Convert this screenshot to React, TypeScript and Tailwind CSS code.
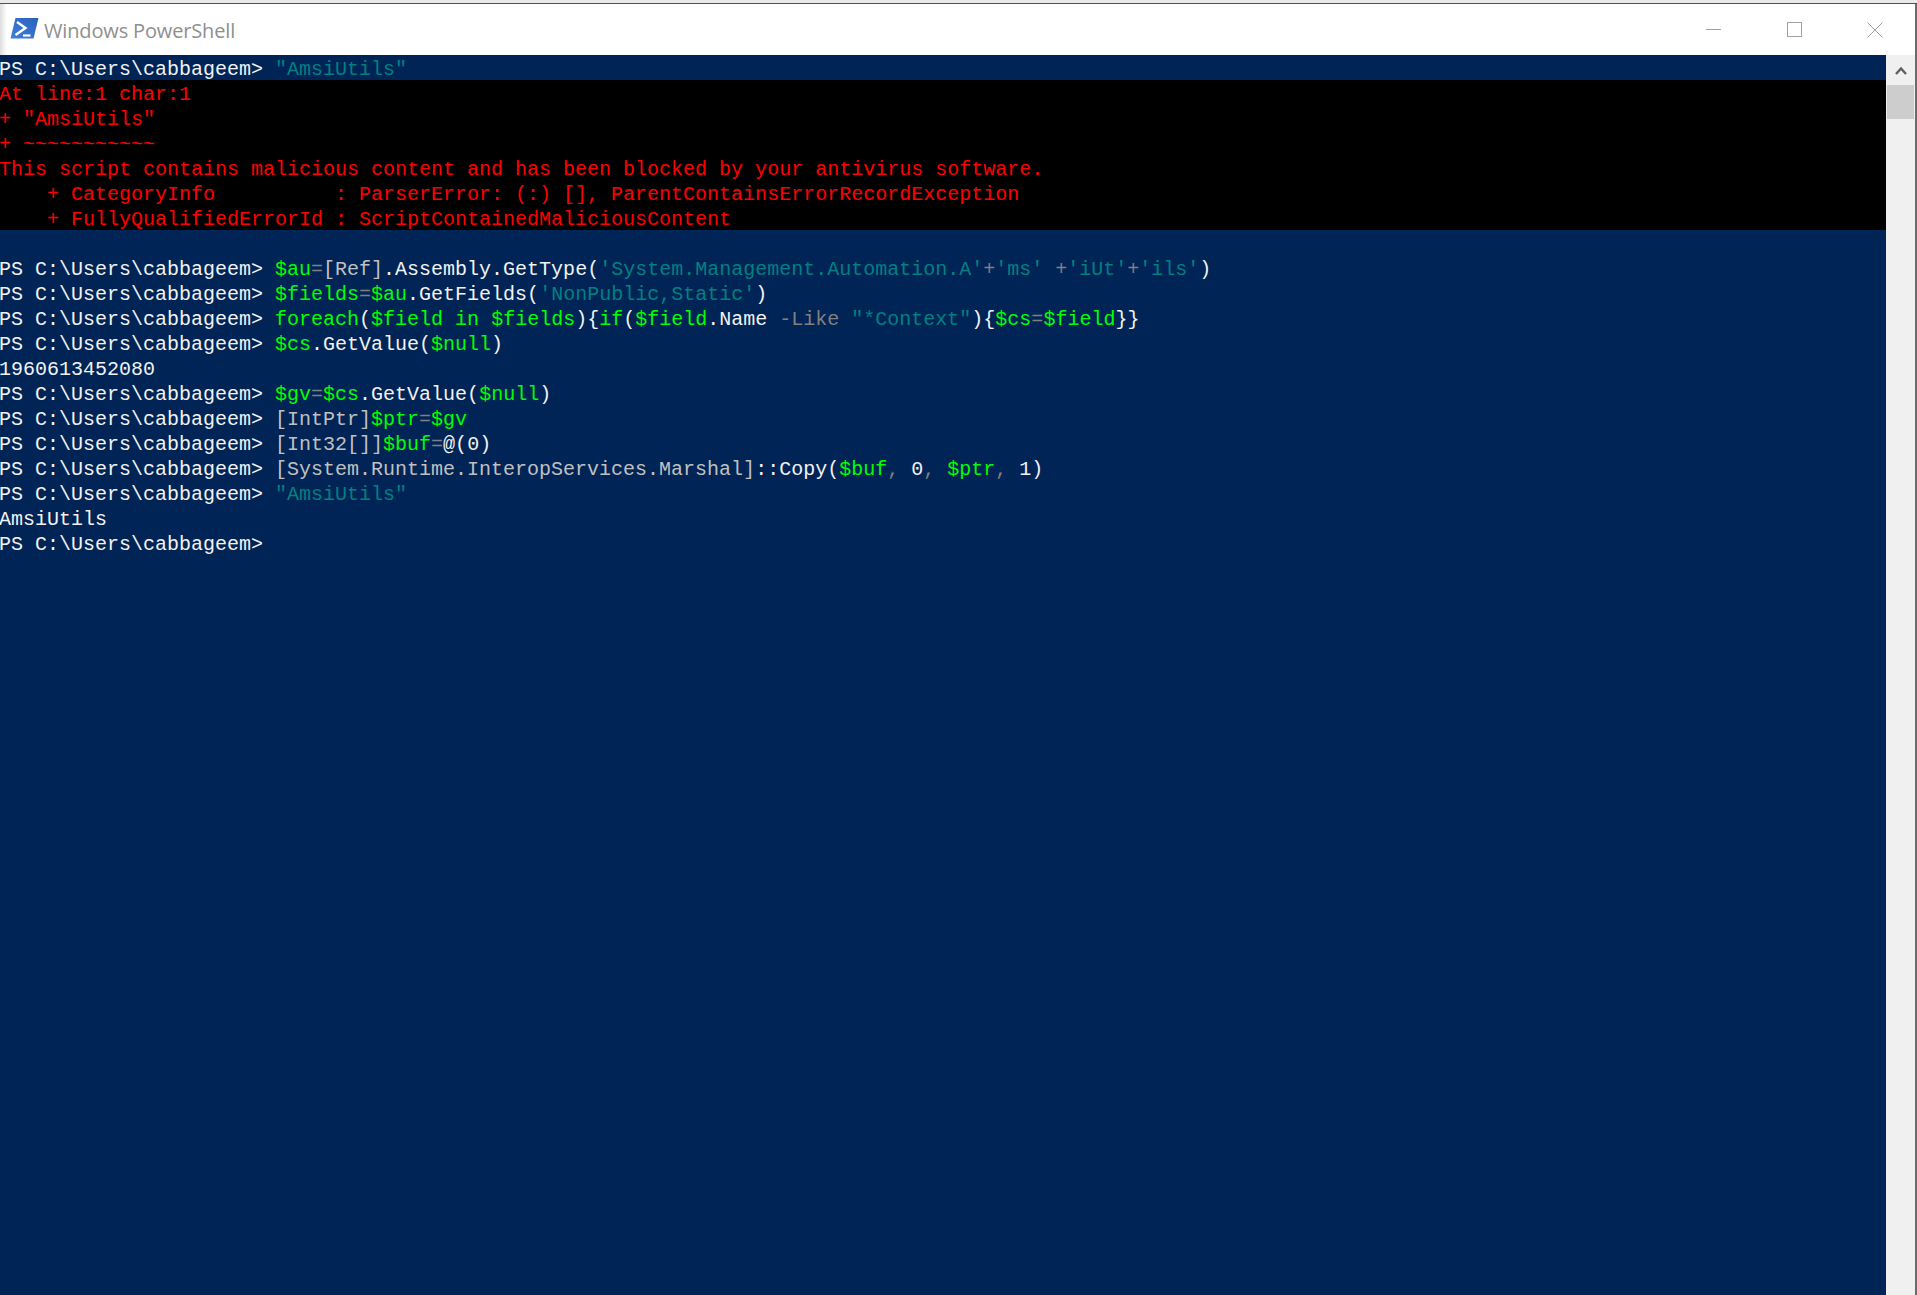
import React from 'react';

// token colours, same as the PSReadLine defaults on the blue console
const W = 'text-[#f2f2f2]';
const G = 'text-[#00ff00]';
const T = 'text-[#008080]';
const S = 'text-[#c0c0c0]';
const D = 'text-[#808080]';

type Run = [string, string];

function Prompt({ runs }: { runs?: Run[] }) {
  return (
    <div className="h-[25px]">
      <span className={W}>{'PS C:\\Users\\cabbageem> '}</span>
      {runs?.map(([text, color], i) => (
        <span key={i} className={color}>
          {text}
        </span>
      ))}
    </div>
  );
}

function PowerShellIcon() {
  return (
    <svg width="29" height="23" viewBox="0 0 29 23" className="shrink-0">
      <defs>
        <linearGradient id="psBlue" x1="0" y1="1" x2="1" y2="0">
          <stop offset="0" stopColor="#3f7fdc" />
          <stop offset="1" stopColor="#2a62b8" />
        </linearGradient>
      </defs>
      <path d="M5.5 1 H28.5 L23.5 21.5 H0.5 Z" fill="url(#psBlue)" />
      <path d="M7 5 L15.5 11 L5.5 18" fill="none" stroke="#fff" strokeWidth="2.4" />
      <path d="M13 18.5 H20.5" stroke="#fff" strokeWidth="2.2" />
    </svg>
  );
}

export default function App() {
  return (
    <div className="w-[1917px] h-[1295px] flex flex-col overflow-hidden bg-white">
      <div className="h-[4px] shrink-0 bg-[#e9e9e9] border-b border-[#4a5560]" />

      <div className="flex flex-1 min-h-0">
        <div className="flex-1 min-w-0 flex flex-col">
          {/* Title bar */}
          <div className="h-[51px] shrink-0 flex items-center bg-[linear-gradient(to_right,#dedede,#ffffff_7px)]">
            <div className="ml-[10px] mr-[5px] mt-[-2px]">
              <PowerShellIcon />
            </div>
            <span className="font-['Open_Sans',sans-serif] text-[20px] tracking-[-0.15px] text-[#8f8f8f] mt-[2px]">
              Windows PowerShell
            </span>
            <div className="ml-auto flex items-center mr-[32px] mt-[0px]">
              <div className="w-[15px] h-px bg-[#a0a0a0] mr-[66px]" />
              <div className="w-[15px] h-[15px] border border-[#a0a0a0] mr-[65px]" />
              <svg width="16" height="16" viewBox="0 0 16 16">
                <path d="M0.5 0.5 L15.5 15.5 M15.5 0.5 L0.5 15.5" stroke="#a0a0a0" strokeWidth="1" fill="none" />
              </svg>
            </div>
          </div>

          <div className="flex flex-1 min-h-0">
            {/* Console */}
            <div className="flex-1 min-w-0 bg-[#012456] font-['Liberation_Mono',monospace] text-[20px] leading-[30px] indent-[-1px] whitespace-pre">
              <Prompt runs={[['"AmsiUtils"', T]]} />
              <div className="bg-black text-[#ff0000]">
                <div className="h-[25px]">At line:1 char:1</div>
                <div className="h-[25px]">+ "AmsiUtils"</div>
                <div className="h-[25px]">+ ~~~~~~~~~~~</div>
                <div className="h-[25px]">This script contains malicious content and has been blocked by your antivirus software.</div>
                <div className="h-[25px]">    + CategoryInfo          : ParserError: (:) [], ParentContainsErrorRecordException</div>
                <div className="h-[25px]">    + FullyQualifiedErrorId : ScriptContainedMaliciousContent</div>
              </div>
              <div className="h-[25px]" />
              <Prompt
                runs={[
                  ['$au', G],
                  ['=', D],
                  ['[Ref]', S],
                  ['.Assembly.GetType(', W],
                  ["'System.Management.Automation.A'", T],
                  ['+', D],
                  ["'ms'", T],
                  [' ', W],
                  ['+', D],
                  ["'iUt'", T],
                  ['+', D],
                  ["'ils'", T],
                  [')', W],
                ]}
              />
              <Prompt
                runs={[
                  ['$fields', G],
                  ['=', D],
                  ['$au', G],
                  ['.GetFields(', W],
                  ["'NonPublic,Static'", T],
                  [')', W],
                ]}
              />
              <Prompt
                runs={[
                  ['foreach', G],
                  ['(', W],
                  ['$field', G],
                  [' ', W],
                  ['in', G],
                  [' ', W],
                  ['$fields', G],
                  [')', W],
                  ['{', W],
                  ['if', G],
                  ['(', W],
                  ['$field', G],
                  ['.Name ', W],
                  ['-Like', D],
                  [' ', W],
                  ['"*Context"', T],
                  [')', W],
                  ['{', W],
                  ['$cs', G],
                  ['=', D],
                  ['$field', G],
                  ['}}', W],
                ]}
              />
              <Prompt
                runs={[
                  ['$cs', G],
                  ['.GetValue(', W],
                  ['$null', G],
                  [')', W],
                ]}
              />
              <div className={`h-[25px] ${W}`}>1960613452080</div>
              <Prompt
                runs={[
                  ['$gv', G],
                  ['=', D],
                  ['$cs', G],
                  ['.GetValue(', W],
                  ['$null', G],
                  [')', W],
                ]}
              />
              <Prompt
                runs={[
                  ['[IntPtr]', S],
                  ['$ptr', G],
                  ['=', D],
                  ['$gv', G],
                ]}
              />
              <Prompt
                runs={[
                  ['[Int32[]]', S],
                  ['$buf', G],
                  ['=', D],
                  ['@(', W],
                  ['0', W],
                  [')', W],
                ]}
              />
              <Prompt
                runs={[
                  ['[System.Runtime.InteropServices.Marshal]', S],
                  ['::Copy(', W],
                  ['$buf', G],
                  [',', D],
                  [' ', W],
                  ['0', W],
                  [',', D],
                  [' ', W],
                  ['$ptr', G],
                  [',', D],
                  [' 1)', W],
                ]}
              />
              <Prompt runs={[['"AmsiUtils"', T]]} />
              <div className={`h-[25px] ${W}`}>AmsiUtils</div>
              <Prompt />
            </div>

            {/* Scrollbar */}
            <div className="w-[29px] shrink-0 bg-[#f0f0f0] flex flex-col items-center">
              <div className="h-[30px] w-full flex items-center justify-center">
                <svg width="12" height="9" viewBox="0 0 12 9">
                  <path d="M1 8 L6 2.5 L11 8" fill="none" stroke="#606060" strokeWidth="2.4" />
                </svg>
              </div>
              <div className="w-[27px] h-[34px] bg-[#cdcdcd]" />
            </div>
          </div>
        </div>

        {/* Window edge */}
        <div className="w-[2px] shrink-0 bg-[#6b6b6b]" />
      </div>
    </div>
  );
}
